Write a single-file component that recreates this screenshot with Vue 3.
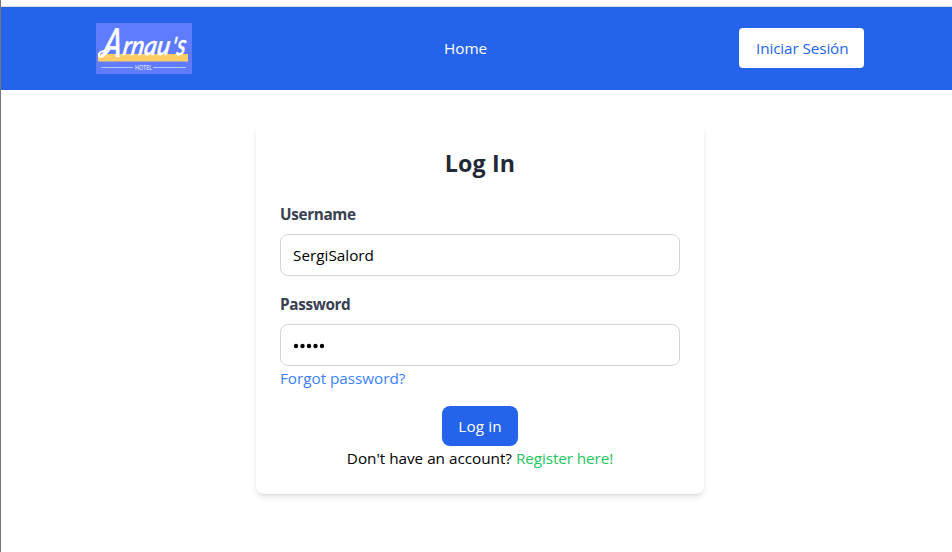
<script setup>
import { ref } from 'vue'

const username = ref('SergiSalord')
const password = ref('12345')
</script>

<template>
  <div class="page">
    <div class="strip"></div>
    <header class="bar">
      <svg class="logo" width="96" height="51" viewBox="0 0 96 51" role="img" aria-label="Arnau's Hotel">
        <rect width="96" height="51" fill="#5f7bff" />
        <rect x="2" y="31" width="90" height="7.5" fill="#ffcc66" />
        <path d="M9 28C4 28 2 31 3 33C5 36 11 31 15 24" fill="none" stroke="#fff" stroke-width="2" stroke-linecap="round" />
        <g class="script" transform="translate(6 0) skewX(-9)">
          <text x="5" y="34" font-size="40" textLength="19" lengthAdjust="spacingAndGlyphs">A</text>
          <text x="25" y="32" font-size="27" textLength="47" lengthAdjust="spacingAndGlyphs">rnau</text>
          <text x="74" y="32" font-size="25" textLength="4" lengthAdjust="spacingAndGlyphs">'</text>
          <text x="79" y="32.5" font-size="29" textLength="9" lengthAdjust="spacingAndGlyphs">s</text>
        </g>
        <path d="M5 44.5H37M57 44.5H90" stroke="#b8c4ff" stroke-width="1" />
        <text class="hotel" x="39" y="46.8" textLength="17" lengthAdjust="spacingAndGlyphs">HOTEL</text>
      </svg>
      <a class="home">Home</a>
      <a class="session"><span>Iniciar Sesión</span></a>
    </header>
    <main class="content">
      <form class="card" @submit.prevent>
        <h1><span>Log In</span></h1>
        <label for="u">Username</label>
        <input id="u" v-model="username" type="text" />
        <label for="p">Password</label>
        <div id="p" class="field"><svg width="34" height="6" viewBox="0 0 34 6"><circle v-for="n in password.length" :key="n" :cx="n * 6.5 - 3.5" cy="3" r="2.2" /></svg></div>
        <a class="forgot">Forgot password?</a>
        <button type="submit">Log in</button>
        <p><span>Don't have an account?</span><a class="register">Register here!</a></p>
      </form>
    </main>
  </div>
</template>

<style>
body { background: #fff; }
</style>

<style scoped>
* { box-sizing: border-box; }
.page {
  height: 552px;
  border-left: 1px solid #767676;
  font: 15.3px/24px "Open Sans", "Noto Sans", sans-serif;
  color: #000;
  overflow: hidden;
  white-space: nowrap;
}
.strip { height: 7px; border-bottom: 1px solid #deded8; }
.bar {
  height: 83px;
  padding: 0 88px 1px 95px;
  background: #2563eb;
  display: flex;
  align-items: center;
  justify-content: space-between;
}
.logo { display: block; overflow: visible; }
.script text {
  font-family: "Lato", sans-serif;
  font-style: italic;
  font-weight: 500;
  fill: #fff;
  stroke: #fff;
  stroke-width: 0.5;
}
.hotel { font: 6.4px "Open Sans", sans-serif; fill: #fff; }
.home { color: #fff; width: 43px; letter-spacing: -0.05px; }
.session {
  width: 125px;
  height: 40px;
  padding: 8px 0 8px 17px;
  border-radius: 4px;
  background: #fff;
  color: #2563eb;
  letter-spacing: -0.12px;
}
.content { padding: 32px 248px 0 255px; }
.card {
  height: 372px;
  padding: 24px;
  border-radius: 8px;
  background: #fff;
  box-shadow: 0 4px 6px -1px rgba(0, 0, 0, 0.1), 0 2px 4px -2px rgba(0, 0, 0, 0.1);
  display: flex;
  flex-direction: column;
}
h1 {
  margin: 0 0 24px;
  padding-top: 1px;
  height: 32px;
  font-size: 23.2px;
  line-height: 32px;
  font-weight: 700;
  color: #1f2937;
  text-align: center;
  letter-spacing: 0.15px;
}
label { margin-bottom: 8px; font-weight: 700; color: #374151; letter-spacing: -0.35px; }
input, .field {
  width: 400px;
  height: 42px;
  flex: none;
  padding: 8px 12px;
  border: 1px solid #d1d5db;
  border-radius: 8px;
  background: #fff;
}
input {
  margin-bottom: 16px;
  font: inherit;
  color: inherit;
  letter-spacing: 0;
  outline: none;
}
.field { display: flex; align-items: center; padding: 10px 12px 8px; }
.forgot { color: #3b82f6; margin-bottom: 16px; letter-spacing: -0.04px; }
button {
  align-self: center;
  width: 76px;
  height: 40px;
  flex: none;
  padding: 0;
  border: 0;
  border-radius: 8px;
  background: #2563eb;
  color: #fff;
  font: inherit;
  letter-spacing: 0.1px;
}
p { margin: 0; display: flex; justify-content: center; gap: 4px; letter-spacing: -0.02px; }
.register { color: #22c55e; letter-spacing: -0.1px; }
</style>
